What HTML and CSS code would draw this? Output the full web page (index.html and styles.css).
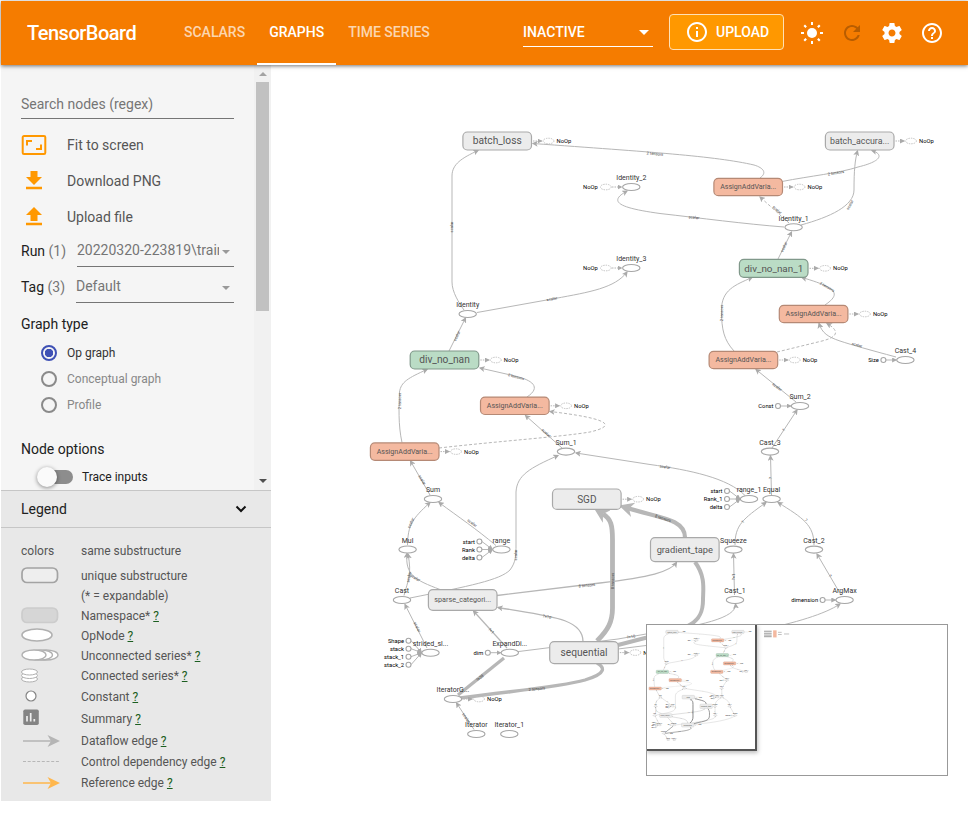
FILE: index.html
```html
<!DOCTYPE html>
<html lang="en">
<head>
<meta charset="utf-8">
<title>TensorBoard</title>
<link rel="stylesheet" href="styles.css">
</head>
<body>
<header class="toolbar">
  <h1 class="brand">TensorBoard</h1>
  <nav class="tabs">
    <a class="tab">SCALARS</a>
    <a class="tab active">GRAPHS</a>
    <a class="tab">TIME SERIES</a>
  </nav>
  <div class="inactive"><span>INACTIVE</span><i class="caret"></i></div>
  <button class="upload">
    <svg viewBox="0 0 24 24"><path d="M11 7h2v2h-2zm0 4h2v6h-2zm1-9C6.48 2 2 6.48 2 12s4.480 10 10 10 10-4.480 10-10S17.520 2 12 2zm0 18c-4.410 0-8-3.590-8-8s3.590-8 8-8 8 3.590 8 8-3.590 8-8 8z"/></svg>
    <span>UPLOAD</span>
  </button>
  <div class="actions">
    <svg viewBox="0 0 24 24"><circle cx="12" cy="12" r="5"/><path d="M11 1h2v3h-2zM11 20h2v3h-2zM1 11h3v2H1zM20 11h3v2h-3zM3.500 5l1.500-1.500 1.900 1.900-1.500 1.500zM17.100 18.600l1.500-1.500 1.900 1.900-1.500 1.500zM19 3.500L20.500 5l-1.900 1.900-1.500-1.500zM5.400 17.100l1.500 1.500L5 20.500 3.500 19z"/></svg>
    <svg class="dim" viewBox="0 0 24 24"><path d="M17.650 6.350C16.200 4.900 14.210 4 12 4c-4.420 0-7.990 3.580-7.990 8s3.570 8 7.990 8c3.730 0 6.840-2.550 7.730-6h-2.080c-.82 2.330-3.040 4-5.650 4-3.310 0-6-2.690-6-6s2.690-6 6-6c1.660 0 3.140.69 4.220 1.780L13 11h7V4l-2.350 2.350z"/></svg>
    <svg viewBox="0 0 24 24"><path d="M19.430 12.980c.04-.32.07-.64.07-.98s-.03-.66-.07-.98l2.110-1.650c.19-.15.24-.42.12-.64l-2-3.460c-.12-.22-.39-.3-.61-.22l-2.490 1c-.52-.4-1.080-.73-1.690-.98l-.38-2.650C14.460 2.180 14.250 2 14 2h-4c-.25 0-.46.18-.49.42l-.38 2.650c-.61.25-1.170.59-1.690.98l-2.490-1c-.23-.09-.49 0-.61.22l-2 3.460c-.13.22-.07.49.12.64l2.110 1.650c-.04.32-.07.65-.07.98s.03.66.07.98l-2.110 1.650c-.19.15-.24.42-.12.64l2 3.460c.12.22.39.3.61.22l2.490-1c.52.4 1.080.73 1.690.98l.38 2.650c.03.24.24.42.49.42h4c.25 0 .46-.18.49-.42l.38-2.650c.61-.25 1.170-.59 1.690-.98l2.490 1c.23.09.49 0 .61-.22l2-3.460c.12-.22.07-.49-.12-.64l-2.110-1.650zM12 15.500c-1.930 0-3.500-1.570-3.500-3.500s1.570-3.500 3.500-3.500 3.500 1.570 3.500 3.500-1.570 3.500-3.500 3.500z"/></svg>
    <svg viewBox="0 0 24 24"><path d="M11 18h2v-2h-2v2zm1-16C6.480 2 2 6.480 2 12s4.480 10 10 10 10-4.480 10-10S17.520 2 12 2zm0 18c-4.410 0-8-3.590-8-8s3.590-8 8-8 8 3.590 8 8-3.590 8-8 8zm0-14c-2.210 0-4 1.790-4 4h2c0-1.100.9-2 2-2s2 .9 2 2c0 2-3 1.750-3 5h2c0-2.250 3-2.500 3-5 0-2.210-1.790-4-4-4z"/></svg>
  </div>
</header>

<div class="content">
  <aside class="sidebar">
    <div class="scroller">
      <div class="controls">
        <div class="search">Search nodes (regex)</div>
        <div class="command">
          <svg viewBox="0 0 26 26"><path d="M3 4h20a1.300 1.300 0 0 1 1.300 1.300v15.400a1.300 1.300 0 0 1-1.300 1.300H3a1.300 1.300 0 0 1-1.300-1.300V5.300A1.300 1.300 0 0 1 3 4z" fill="none" stroke="#ff9800" stroke-width="2"/><path d="M5 8h6v2H7v3.500H5zM21 18h-6v-2h4v-3.500h2z"/></svg>
          <span>Fit to screen</span>
        </div>
        <div class="command">
          <svg viewBox="0 0 26 26"><path d="M21 9h-4.500V3h-7v6H5l8 8zM5 18.800v2.400h16v-2.400z"/></svg>
          <span>Download PNG</span>
        </div>
        <div class="command">
          <svg viewBox="0 0 26 26"><path d="M9.500 17h7v-6H21l-8-8-8 8h4.500zM5 18.800v2.400h16v-2.400z"/></svg>
          <span>Upload file</span>
        </div>
        <div class="picker"><span class="name">Run <em>(1)</em></span><div class="dropdown run"><span>20220320-223819\train</span><i class="caret"></i></div></div>
        <div class="picker"><span class="name">Tag <em>(3)</em></span><div class="dropdown tag"><span>Default</span><i class="caret"></i></div></div>
        <h2 class="heading">Graph type</h2>
        <div class="radio checked"><i></i>Op graph</div>
        <div class="radio"><i></i>Conceptual graph</div>
        <div class="radio"><i></i>Profile</div>
        <h2 class="heading options">Node options</h2>
        <div class="toggle"><i></i>Trace inputs</div>
      </div>
      <div class="scrollbar"><i class="up"></i><b></b><i class="down"></i></div>
    </div>
    <div class="legend-title"><span>Legend</span>
      <svg viewBox="0 0 12 8"><path d="M1.500 1.500L6 6l4.500-4.500" fill="none" stroke="#111" stroke-width="2"/></svg>
    </div>
    <div class="legend">
      <div class="item"><span>colors</span><span>same substructure</span></div>
      <div class="item first"><svg viewBox="0 0 40 20"><rect x="1" y="2" width="35.500" height="14.500" rx="5" fill="#eee" stroke="#a3a3a3" stroke-width="1.700"/></svg><span>unique substructure</span></div>
      <div class="item"><span></span><span>(* = expandable)</span></div>
      <div class="item"><svg viewBox="0 0 40 20"><rect x="1" y="2" width="35.500" height="14.500" rx="5" fill="#d6d6d6" stroke="#ccc" stroke-width="1.700"/></svg><span>Namespace* <a>?</a></span></div>
      <div class="item"><svg viewBox="0 0 40 20"><ellipse cx="16" cy="9" rx="15" ry="6" fill="#fff" stroke="#b0b0b0" stroke-width="1.600"/></svg><span>OpNode <a>?</a></span></div>
      <div class="item"><svg viewBox="0 0 40 20"><g fill="#fff" stroke="#b0b0b0" stroke-width="1.300"><ellipse cx="25" cy="9" rx="12" ry="5"/><ellipse cx="19" cy="9" rx="12.500" ry="5"/><ellipse cx="13" cy="9" rx="12" ry="5"/></g></svg><span>Unconnected series* <a>?</a></span></div>
      <div class="item"><svg viewBox="0 0 40 20"><g fill="#fff" stroke="#b0b0b0"><ellipse cx="8.500" cy="13" rx="8" ry="3"/><ellipse cx="8.500" cy="9.500" rx="8" ry="3"/><ellipse cx="8.500" cy="6" rx="8" ry="3"/></g></svg><span>Connected series* <a>?</a></span></div>
      <div class="item tall"><svg viewBox="0 0 40 20"><circle cx="10" cy="9" r="5" fill="#fff" stroke="#848484" stroke-width="1.200"/></svg><span>Constant <a>?</a></span></div>
      <div class="item tall"><svg viewBox="0 0 40 20"><rect x="2.300" y="0.500" width="15.500" height="15.500" rx="1.800" fill="#848484"/><path d="M6 7v5.500M9.700 4v8.500M13.300 10v2.500" stroke="#eee" stroke-width="1.700"/></svg><span>Summary <a>?</a></span></div>
      <div class="item tall"><svg viewBox="0 0 40 20"><path d="M2 10h28" stroke="#b5b5b5" stroke-width="1.500"/><path d="M26.500 4L39 10l-12.500 6 3.500-6z" fill="#b5b5b5"/></svg><span>Dataflow edge <a>?</a></span></div>
      <div class="item"><svg viewBox="0 0 40 20"><path d="M2 9.500h36" stroke="#b7b7b7" stroke-width="1.200" stroke-dasharray="3 1.700"/></svg><span>Control dependency edge <a>?</a></span></div>
      <div class="item tall"><svg viewBox="0 0 40 20"><path d="M2 10h28" stroke="#ffb74d" stroke-width="1.500"/><path d="M26.500 4L39 10l-12.500 6 3.500-6z" fill="#ffb74d"/></svg><span>Reference edge <a>?</a></span></div>
    </div>
  </aside>

  <main class="stage">
    <svg class="graph" viewBox="271 65 697 755">
      <defs>
        <marker id="arrow" viewBox="0 0 10 10" refX="8" refY="5" markerWidth="6" markerHeight="6" markerUnits="userSpaceOnUse" orient="auto"><path d="M0 0L10 5 0 10 2.500 5z" fill="#aaa"/></marker>
        <marker id="small" viewBox="0 0 10 10" refX="9" refY="5" markerWidth="5" markerHeight="5" markerUnits="userSpaceOnUse" orient="auto"><path d="M0 0L10 5 0 10z" fill="#aaa"/></marker>
        <marker id="large" viewBox="0 0 10 10" refX="3" refY="5" markerWidth="15" markerHeight="15" markerUnits="userSpaceOnUse" orient="auto"><path d="M0 0L10 5 0 10 3 5z" fill="#b8b8b8"/></marker>
      </defs>
      <g id="network"></g>
    </svg>
    <div class="minimap">
      <svg viewBox="359.900 102.700 1648.400 824.200">
        <use href="#network"/>
        <g>
          <rect x="1053" y="132" width="19" height="39" fill="#f4b9a0"/>
          <path d="M1003 137h42M1003 148h42M1003 158h42M1003 167h42" stroke="#777" stroke-width="4"/>
          <path d="M1080 143h20M1080 155h20M1113 152h28" stroke="#aaa" stroke-width="4"/>
        </g>
      </svg>
      <div class="lens"></div>
    </div>
  </main>
</div>
<script src="graph.js"></script>
</body>
</html>
```
FILE: styles.css
```css
* { box-sizing: border-box; }
body { margin: 0; padding: 1px 0 0 1px; background: #fff; font-family: Roboto, "Liberation Sans", sans-serif; font-size: 14px; color: #212121; height: 821px; overflow: hidden; }
svg { display: block; }

.toolbar { position: relative; z-index: 2; display: flex; align-items: center; height: 64px; background: #f57c00; color: #fff; box-shadow: 0 1px 4px rgba(0,0,0,.55); font-weight: 500; }
.brand { margin: 0 0 0 26px; width: 145px; font-size: 20px; font-weight: 500; letter-spacing: -.5px; }
.tabs { display: flex; height: 64px; width: 351px; }
.tab { padding: 0 12px; line-height: 62px; color: rgba(255,255,255,.7); border-bottom: 2px solid transparent; white-space: nowrap; }
.tab.active { color: #fff; border-color: #fff; }
.inactive { display: flex; justify-content: space-between; align-items: center; width: 130px; height: 28px; padding-bottom: 1px; border-bottom: 1px solid #fff; }
.caret { border: 5px solid transparent; border-top-color: currentColor; border-bottom: 0; }
.inactive .caret { margin-right: 4px; }
.upload { display: flex; align-items: center; gap: 7px; width: 115px; height: 36px; margin-left: 16px; margin-top: -2px; padding: 0 0 0 15px; border: 1px solid #ffe0b5; border-radius: 4px; background: #ff9800; color: #fff; font: 500 14px Roboto, sans-serif; }
.upload svg { width: 24px; height: 24px; fill: #fff; }
.upload span { padding-bottom: 1px; }
.actions { display: flex; gap: 16px; margin-left: 16px; }
.actions svg { width: 24px; height: 24px; fill: #fff; }
.actions .dim { fill: #b85d00; }

.content { display: flex; }
.sidebar { width: 270px; height: 736px; background: #e8e8e8; }
.scroller { display: flex; height: 425px; background: #f5f5f5; overflow: hidden; }
.controls { width: 253px; padding: 22px 20px 0; }
.search { height: 32px; line-height: 34px; border-bottom: 1px solid #757575; color: #757575; margin-bottom: 8px; letter-spacing: 0; }
.command { display: flex; align-items: center; gap: 20px; height: 36px; color: #555; }
.command svg { width: 26px; height: 26px; fill: #ff9800; }
.picker { display: flex; justify-content: space-between; height: 36px; line-height: 33px; }
.name em { font-style: normal; color: #757575; }
.dropdown { display: flex; align-items: center; justify-content: space-between; height: 32px; border-bottom: 1px solid #757575; color: #757575; }
.dropdown span { overflow: hidden; white-space: nowrap; width: 142px; }
.run { width: 157px; }
.tag { width: 158px; }
.dropdown .caret { border-width: 4px; border-bottom: 0; margin: 3px 4px 0 0; color: #999; }
.heading { margin: 0; height: 36px; line-height: 34px; font-size: 14px; font-weight: 400; }
.radio { display: flex; align-items: center; height: 26px; padding-left: 20px; gap: 10px; font-size: 12px; color: #888; }
.heading + .radio { margin-top: -3px; }
.radio i { width: 16px; height: 16px; border: 2px solid #8a8a8a; border-radius: 50%; }
.checked { color: #333; }
.checked i { border-color: #3f51b5; background: radial-gradient(#3f51b5 0 4px, transparent 4.500px); }
.options { margin-top: 15px; line-height: 33px; }
.options + .toggle { margin-top: -5px; }
.toggle { display: flex; align-items: center; height: 26px; padding-left: 20px; font-size: 12px; gap: 9px; }
.toggle i { width: 32px; height: 14px; border-radius: 7px; background: #8d8d8d; display: flex; align-items: center; }
.toggle i::before { content: ""; flex: none; width: 20px; height: 20px; margin-left: -4px; border-radius: 50%; background: #fafafa; box-shadow: 0 1px 4px rgba(0,0,0,.45); }
.scrollbar { display: flex; flex-direction: column; align-items: center; width: 17px; background: #f1f1f1; }
.scrollbar i { border: 4px solid transparent; }
.scrollbar .up { border-bottom-color: #a3a3a3; border-top: 0; margin: 7px 0 6px; }
.scrollbar .down { border-top-color: #505050; border-bottom: 0; margin: auto 0 7px; }
.scrollbar b { width: 13px; height: 229px; background: #c1c1c1; }
.legend-title { display: flex; align-items: center; justify-content: space-between; height: 38px; padding: 0 24px 0 20px; border: solid #c6c6c6; border-width: 1px 0; }
.legend-title svg { width: 12px; height: 8px; }
.legend { padding-top: 13px; font-size: 12px; color: #555; }
.item { display: grid; grid-template-columns: 60px 1fr; align-items: center; height: 20px; padding-left: 20px; white-space: nowrap; }
.item svg { width: 40px; height: 20px; }
.item.first { height: 25px; padding-top: 5px; }
.item.tall { height: 22px; }
.item a { color: #1b5e20; text-decoration: underline; }

.stage { position: relative; width: 697px; height: 755px; }
.graph { width: 697px; height: 755px; }
.minimap { position: absolute; left: 375px; top: 559px; width: 302px; height: 152px; background: #fff; border: 1px solid #999; overflow: hidden; }
.minimap svg { width: 300px; height: 150px; --edge: #777; --edge-min: 1.8px; }
.lens { position: absolute; left: -1px; top: -1px; width: 111px; height: 127px; border: solid #555; border-width: 1px 2px 2px 1px; box-shadow: 1px 2px 4px rgba(0,0,0,.25); }

#network text { text-anchor: middle; fill: #333; font-size: 7px; }
#network .box { fill: #ececec; stroke: #a9a9a9; stroke-width: 1.200; }
#network .green { fill: #badcc5; stroke: #80988a; }
#network .orange { fill: #f4b9a0; stroke: #b58975; }
#network .title { fill: #555; }
#network .op { fill: #fff; stroke: var(--edge, #a6a6a6); stroke-width: 1.100; }
#network .ghost { fill: none; stroke: #bbb; stroke-width: .9; stroke-dasharray: 1.400 1; }
#network .edge { fill: none; stroke: var(--edge, #b7b7b7); }
#network .dashed { stroke-dasharray: 3 2; }
#network .dotted { stroke-dasharray: 1.500 1; }
#network .note { font-size: 5.800px; fill: #000; }
#network .start { text-anchor: start; }
#network .end { text-anchor: end; }
#network .size { font-size: 4px; fill: #444; }
```
FILE: graph.js
```js
const NS = 'http://www.w3.org/2000/svg';
const root = document.getElementById('network');
function add(tag, attrs, text) {
  const el = document.createElementNS(NS, tag);
  for (const key in attrs) el.setAttribute(key, attrs[key]);
  if (text) el.textContent = text;
  root.appendChild(el);
}

// path, width, marker, extra class
const edges = [
  ['M464 310C459 303 452 292 452 282V176C452 164 462 158 478 150.500'],
  ['M477 312.500L555 298.500C590 292 615 288 627 272'],
  ['M760 178C767 173 764 168 754 165C715 156 650 152 533 143.500'],
  ['M784 227C745 224 700 218 660 213.500C620 208 607 202 627 191'],
  ['M789 223L760 197', 1, 'arrow', 'dashed'],
  ['M782 181.500C810 176 840 173 858 167C883 161 883 154 872 150.500'],
  ['M801 225C830 217 854 206 854 190C854 170 855 160 857.500 151'],
  ['M778 259L791.500 232'],
  ['M825 305C841 294 838 288 802 277.500'],
  ['M734 351C724 340 721.500 330 721.500 310C721.500 290 735 285 752 277.500'],
  ['M777 352L822 341C838 337 840 331 827 323.500', 1, 'arrow', 'dashed'],
  ['M896 357C870 350 852 345 840 341C828 337 822 333 819 323.500'],
  ['M796 402L756 369.500'],
  ['M772 448L797 410'],
  ['M771.500 495L770.500 456'],
  ['M745 495.500C728 478 690 470 650 464.500L576 453'],
  ['M562 448L525.500 415.500'],
  ['M527 397C542 387 532 380 515 376L480 368'],
  ['M439 448C500 441 560 437 590 432C620 425 605 418 550 411.500', 1, 'arrow', 'dashed'],
  ['M402 442.500C398 425 399 405 399.500 392C401 382 408 378 427 369.500'],
  ['M449 351L465.500 318'],
  ['M430 495L410.500 461'],
  ['M407.500 545C408 525 412 519 430 502.500'],
  ['M496 545.500C475 528 460 518 439 502.500'],
  ['M404 595.500C408 580 412 575 408 554'],
  ['M440 589.500C415 580 405 575 407 553.500'],
  ['M410 598C470 586 500 580 510 570C516 562 516 555 516 545V492C517 475 530 468 558 455.500'],
  ['M427 648L405 604.500'],
  ['M474 729.500L456.500 703'],
  ['M458 695L504 658', 3.3, ''],
  ['M460 698C520 690 560 687 585 680C608 673 604 667 597 663', 3.3, ''],
  ['M507 648L473.500 611', 1.2],
  ['M583 641.500C583 618 548 616 498 607.500', 1.3],
  ['M497 595.500L600 583C650 577 670 572 676.500 562.500', 1.3],
  ['M597 641C608 630 612.500 622 612.500 608V540C612.500 525 611 519 603 514', 4.8, 'large'],
  ['M685 537.500C685 519 660 518 629 508.500', 4.2, 'large'],
  ['M695 562C706 577 703 590 703 600C703 623 690 629 645 638L618 645', 4],
  ['M518 651.600L618 639L646 634C700 626 737 618 735.500 604'],
  ['M618 649L646 645.500C720 640 810 624 840 604'],
  ['M734.500 595L733.500 554'],
  ['M735 545C735 525 743 519 766 502.500'],
  ['M814 545C814 525 803 518 778 502.500'],
  ['M841 595L817 554'],
];
edges.forEach(([d, width = 1, marker = 'arrow', cls = '']) => {
  const attrs = { d, class: 'edge ' + cls, 'stroke-width': width };
  if (marker && !(width === 4)) attrs['marker-end'] = `url(#${marker})`;
  add('path', attrs);
});

// dimensions printed along the edges: x, y, angle, label
[
  [452, 227, -90, 'scalar'], [552, 299, -10, 'scalar'], [655, 154, 5, '2 tensors'], [694, 217.5, 6, 'scalar'],
  [777, 210, 42, 'scalar'], [836, 173, -9, '2 tensors'], [850, 205, -62, 'scalar'], [784, 247, -65, 'scalar'],
  [827, 287, 30, '2 tensors'], [721.5, 313, -90, '2 tensors'], [857, 345, 15, 'scalar'], [777, 387, 38, 'scalar'],
  [784, 430, -58, '?'], [771, 478, -90, '?'], [665, 467, 8, 'scalar'], [546, 433, 42, 'scalar'],
  [516, 377, 15, '2 tensors'], [399.5, 401, -90, '2 tensors'], [457, 336, -65, 'scalar'], [422, 480, 60, 'scalar'],
  [411, 523, -65, 'scalar'], [472, 523, 37, 'scalar'], [409, 577, -80, 'scalar'], [415, 578, 30, 'scalar'],
  [516, 555, -90, 'scalar'], [417, 627, 63, 'scalar'], [466, 718, 57, 'scalar'], [480, 678, -38, '?×28'],
  [537, 689, -6, '2 tensors'], [491, 631, 48, '?×1'], [547, 617, 13, '?×10'], [587, 585.5, -6, '8 tensors'],
  [612.5, 581, -90, '8 tensors'], [663, 518.5, 18, '8 tensors'], [631, 637, -9, '?×10'], [734, 577, -90, '?×1'],
  [743, 522, -55, '?'], [806, 520, 45, '?'], [830, 576, 58, '?']
].forEach(([x, y, r, t]) => add('text', { class: 'size', transform: `translate(${x} ${y}) rotate(${r})`, y: 1.2 }, t));

// x, y, height, label, font size, colour, attached NoOp
[
  [497.2, 141, 18, 'batch_loss', 10.2, ''], [859.7, 141, 18, 'batch_accura...', 8.8, ''],
  [748.2, 187, 17.4, 'AssignAddVaria...', 7.1, 'orange'], [773.7, 268.3, 18, 'div_no_nan_1', 9.9, 'green'],
  [813.6, 314, 17.4, 'AssignAddVaria...', 7.1, 'orange'], [444.5, 360, 18, 'div_no_nan', 10.2, 'green'],
  [514.8, 405.8, 17.4, 'AssignAddVaria...', 7.1, 'orange'], [404.7, 451.6, 17.4, 'AssignAddVaria...', 7.1, 'orange'],
  [743.4, 360, 17.4, 'AssignAddVaria...', 7.1, 'orange'], [586.8, 499.2, 20.4, 'SGD', 10, ''],
  [684.8, 549.6, 24, 'gradient_tape', 9.3, '', false], [462.7, 600, 20.6, 'sparse_categori...', 7.2, '', false],
  [584, 652.6, 22, 'sequential', 10.2, '']
].forEach(([x, y, h, label, size, color, noop = true]) => {
  add('rect', { class: 'box ' + color, x: x - 34.3, y: y - h / 2, width: 68.6, height: h, rx: 4.5 });
  add('text', { class: 'title', x, y: y + size * .34, style: `font-size:${size}px` }, label);
  if (noop) ghost(x + 51.3, y, 1);
});

function ghost(x, y, side) {
  if (side > 0) add('path', { class: 'edge dotted', d: `M${x - 15.5} ${y}H${x - 6.5}`, 'marker-end': 'url(#small)' });
  add('ellipse', { class: 'ghost', cx: x, cy: y, rx: 5.4, ry: 2.8 });
  add('text', { class: 'note ' + (side > 0 ? 'start' : 'end'), x: x + 8 * side, y: y + 2 }, 'NoOp');
}

// x, y, label, constants feeding the op
[
  [631.3, 187, 'Identity_2'], [631.3, 268, 'Identity_3'], [467.7, 314, 'Identity'], [793.6, 227.3, 'Identity_1'],
  [566, 451.6, 'Sum_1'], [905.4, 360, 'Cast_4', 'Size'], [800, 406, 'Sum_2', 'Const'], [770, 451.6, 'Cast_3'],
  [749, 499, 'range_1', 'start', 'Rank_1', 'delta'], [771.6, 499, 'Equal'], [433, 499, 'Sum'], [407.6, 549.5, 'Mul'],
  [501.4, 549.5, 'range', 'start', 'Rank', 'delta'], [402, 600, 'Cast'],
  [430.5, 652.7, 'strided_sl...', 'Shape', 'stack', 'stack_1', 'stack_2'], [509.8, 652.7, 'ExpandDi...', 'dim'],
  [453, 699, 'IteratorG...'], [476.3, 734, 'Iterator'], [509.3, 734, 'Iterator_1'], [733.4, 549.6, 'Squeeze'],
  [814, 549.6, 'Cast_2'], [735, 600, 'Cast_1'], [844.6, 600, 'ArgMax', 'dimension']
].forEach(([x, y, label, ...inputs]) => {
  inputs.forEach((name, i) => {
    const cy = y + (i - (inputs.length - 1) / 2) * 8;
    add('path', { class: 'edge', d: `M${x - 19.5} ${cy}L${x - 8.8} ${y}`, 'marker-end': 'url(#small)' });
    add('circle', { class: 'op', cx: x - 22, cy, r: 2.5 });
    add('text', { class: 'note end', x: x - 26.5, y: cy + 2 }, name);
  });
  add('ellipse', { class: 'op', cx: x, cy: y, rx: 8.7, ry: 3.5 });
  add('text', { x, y: y - 6.8 }, label);
});
[187, 268].forEach(y => {
  ghost(605.8, y, -1);
  add('path', { class: 'edge dotted', d: `M612 ${y}H622`, 'marker-end': 'url(#small)' });
});
ghost(479, 699, 1);
```
